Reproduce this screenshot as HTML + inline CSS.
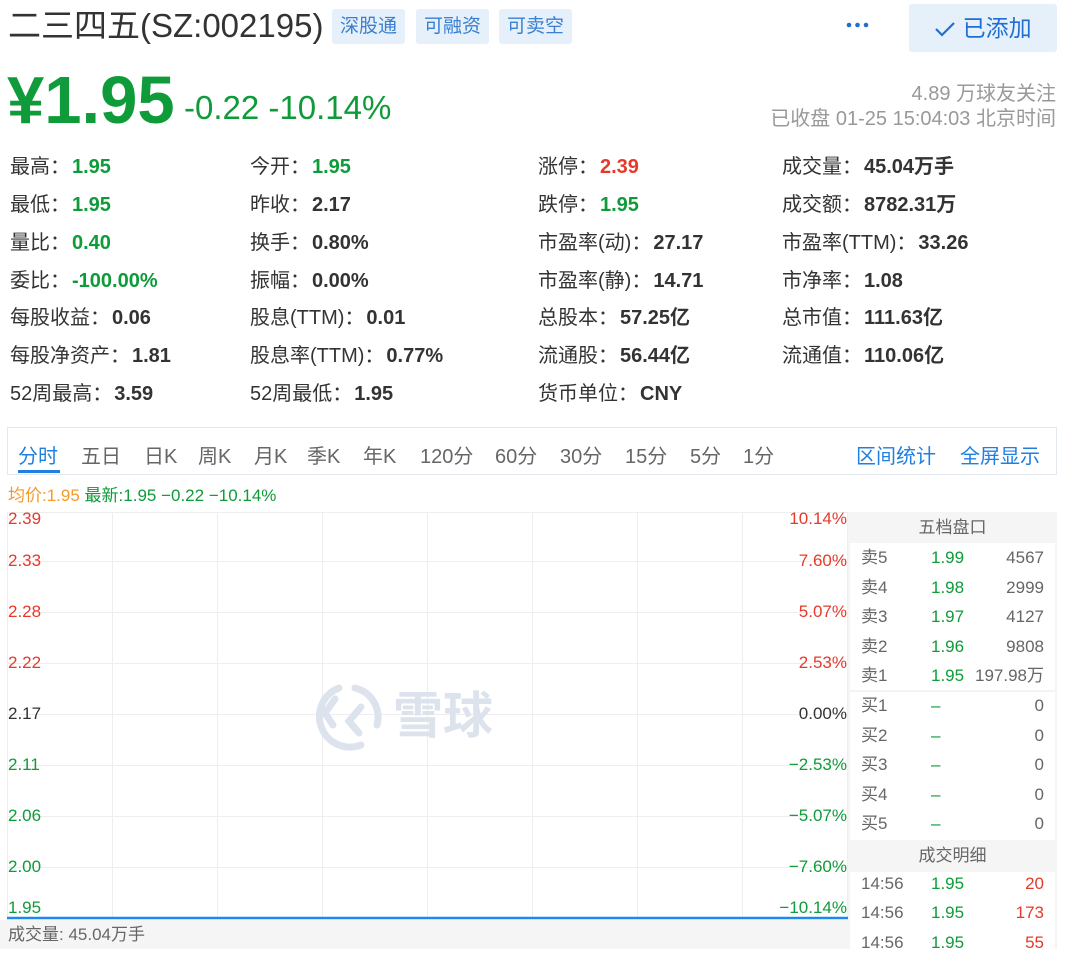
<!DOCTYPE html>
<html><head><meta charset="utf-8"><style>
*{margin:0;padding:0;box-sizing:border-box}
body{width:1080px;height:949px;background:#fff;font-family:"Liberation Sans","Noto Sans CJK SC",sans-serif;position:relative;overflow:hidden;color:#333}
.a{position:absolute;white-space:nowrap}
.tag{position:absolute;top:9px;height:35px;background:#e6f0fb;color:#3a7fd0;font-size:19px;line-height:35px;padding:0 8px;border-radius:3px}
.g{color:#0f9b3a}.r{color:#e53a2a}
.st{position:absolute;font-size:20px;line-height:24px;color:#333;margin-top:2px}
.st b{font-weight:bold;margin-left:2px}
.tab{position:absolute;top:440px;font-size:20px;color:#666}
.pl{position:absolute;left:8px;font-size:17px}
.pr{position:absolute;right:233px;font-size:17px}
.ob{position:absolute;font-size:17px;line-height:20px}
</style></head><body>
<div class="a" style="left:8px;top:5px;font-size:33px;color:#333;line-height:42px">二三四五(SZ:002195)</div>
<div class="tag" style="left:332px">深股通</div>
<div class="tag" style="left:416px">可融资</div>
<div class="tag" style="left:499px">可卖空</div>
<svg class="a" style="left:845px;top:20px" width="26" height="10"><circle cx="4" cy="5" r="2.3" fill="#1f6fd0"/><circle cx="12.5" cy="5" r="2.3" fill="#1f6fd0"/><circle cx="21" cy="5" r="2.3" fill="#1f6fd0"/></svg>
<div class="a" style="left:909px;top:4px;width:148px;height:48px;background:#e6f0fb;border-radius:3px;color:#1f6fd0;font-size:23px;line-height:48px;text-align:center">
<svg width="22" height="16" viewBox="0 0 22 16" style="vertical-align:-1px"><path d="M2 8 L8 14 L20 2" stroke="#1f6fd0" stroke-width="2.2" fill="none"/></svg> 已添加</div>
<div class="a g" style="left:7px;top:63px;font-size:67px;font-weight:bold;line-height:76px">¥1.95</div>
<div class="a g" style="left:184px;top:89px;font-size:33px;line-height:38px">-0.22 -10.14%</div>
<div class="a" style="right:24px;top:82px;font-size:20px;color:#999;text-align:right;line-height:25px">4.89 万球友关注<br>已收盘 01-25 15:04:03 北京时间</div>

<div class="st" style="left:10px;top:153px">最高：<b class="g">1.95</b></div>
<div class="st" style="left:10px;top:191px">最低：<b class="g">1.95</b></div>
<div class="st" style="left:10px;top:229px">量比：<b class="g">0.40</b></div>
<div class="st" style="left:10px;top:267px">委比：<b class="g">-100.00%</b></div>
<div class="st" style="left:10px;top:304px">每股收益：<b>0.06</b></div>
<div class="st" style="left:10px;top:342px">每股净资产：<b>1.81</b></div>
<div class="st" style="left:10px;top:380px">52周最高：<b>3.59</b></div>

<div class="st" style="left:250px;top:153px">今开：<b class="g">1.95</b></div>
<div class="st" style="left:250px;top:191px">昨收：<b>2.17</b></div>
<div class="st" style="left:250px;top:229px">换手：<b>0.80%</b></div>
<div class="st" style="left:250px;top:267px">振幅：<b>0.00%</b></div>
<div class="st" style="left:250px;top:304px">股息(TTM)：<b>0.01</b></div>
<div class="st" style="left:250px;top:342px">股息率(TTM)：<b>0.77%</b></div>
<div class="st" style="left:250px;top:380px">52周最低：<b>1.95</b></div>

<div class="st" style="left:538px;top:153px">涨停：<b class="r">2.39</b></div>
<div class="st" style="left:538px;top:191px">跌停：<b class="g">1.95</b></div>
<div class="st" style="left:538px;top:229px">市盈率(动)：<b>27.17</b></div>
<div class="st" style="left:538px;top:267px">市盈率(静)：<b>14.71</b></div>
<div class="st" style="left:538px;top:304px">总股本：<b>57.25亿</b></div>
<div class="st" style="left:538px;top:342px">流通股：<b>56.44亿</b></div>
<div class="st" style="left:538px;top:380px">货币单位：<b>CNY</b></div>

<div class="st" style="left:782px;top:153px">成交量：<b>45.04万手</b></div>
<div class="st" style="left:782px;top:191px">成交额：<b>8782.31万</b></div>
<div class="st" style="left:782px;top:229px">市盈率(TTM)：<b>33.26</b></div>
<div class="st" style="left:782px;top:267px">市净率：<b>1.08</b></div>
<div class="st" style="left:782px;top:304px">总市值：<b>111.63亿</b></div>
<div class="st" style="left:782px;top:342px">流通值：<b>110.06亿</b></div>

<div class="a" style="left:7px;top:427px;width:1050px;height:48px;border:1px solid #e3e8ef"></div>
<div class="tab" style="left:18px;color:#1f80e0">分时</div>
<div class="a" style="left:18px;top:470px;width:42px;height:3px;background:#1f80e0"></div>
<div class="tab" style="left:81px">五日</div>
<div class="tab" style="left:144px">日K</div>
<div class="tab" style="left:198px">周K</div>
<div class="tab" style="left:254px">月K</div>
<div class="tab" style="left:307px">季K</div>
<div class="tab" style="left:363px">年K</div>
<div class="tab" style="left:420px">120分</div>
<div class="tab" style="left:495px">60分</div>
<div class="tab" style="left:560px">30分</div>
<div class="tab" style="left:625px">15分</div>
<div class="tab" style="left:690px">5分</div>
<div class="tab" style="left:743px">1分</div>
<div class="tab" style="left:856px;color:#1f80e0">区间统计</div>
<div class="tab" style="left:960px;color:#1f80e0">全屏显示</div>

<div class="a" style="left:8px;top:481px;font-size:17px"><span style="color:#f39a2b">均价:1.95</span> <span class="g">最新:1.95 −0.22 −10.14%</span></div>

<svg class="a" style="left:0;top:505px" width="850" height="420">
<g stroke="#eeeeee" stroke-width="1">
<line x1="7" y1="7.5" x2="848" y2="7.5"/>
<line x1="7" y1="56.5" x2="848" y2="56.5"/><line x1="7" y1="107.5" x2="848" y2="107.5"/><line x1="7" y1="158.5" x2="848" y2="158.5"/><line x1="7" y1="209.5" x2="848" y2="209.5"/><line x1="7" y1="260.5" x2="848" y2="260.5"/><line x1="7" y1="311.5" x2="848" y2="311.5"/><line x1="7" y1="362.5" x2="848" y2="362.5"/>
<line x1="7.5" y1="7" x2="7.5" y2="413"/><line x1="112.5" y1="7" x2="112.5" y2="413"/><line x1="217.5" y1="7" x2="217.5" y2="413"/><line x1="322.5" y1="7" x2="322.5" y2="413"/><line x1="427.5" y1="7" x2="427.5" y2="413"/><line x1="532.5" y1="7" x2="532.5" y2="413"/><line x1="637.5" y1="7" x2="637.5" y2="413"/><line x1="742.5" y1="7" x2="742.5" y2="413"/><line x1="847.5" y1="7" x2="847.5" y2="413"/>
</g>
<line x1="7" y1="413" x2="848" y2="413" stroke="#1f88ee" stroke-width="2.5"/>
<g transform="translate(315,178)" fill="none" stroke="#dde3ec" stroke-width="7" stroke-linecap="round">
<path d="M24 5 A30 30 0 1 0 46 62"/><path d="M40 5 A30 30 0 0 1 62 42"/>
<path d="M20 16 L10 30 L18 42"/><path d="M46 24 L34 38 L44 50"/>
</g>
<text x="393" y="228" font-size="50" fill="#dde3ec" font-family="Noto Sans CJK SC,sans-serif" font-weight="bold">雪球</text>
</svg>

<div class="pl r" style="top:509px">2.39</div>
<div class="pl r" style="top:551px">2.33</div>
<div class="pl r" style="top:602px">2.28</div>
<div class="pl r" style="top:653px">2.22</div>
<div class="pl" style="top:704px;color:#333">2.17</div>
<div class="pl g" style="top:755px">2.11</div>
<div class="pl g" style="top:806px">2.06</div>
<div class="pl g" style="top:857px">2.00</div>
<div class="pl g" style="top:898px">1.95</div>
<div class="pr r" style="top:509px">10.14%</div>
<div class="pr r" style="top:551px">7.60%</div>
<div class="pr r" style="top:602px">5.07%</div>
<div class="pr r" style="top:653px">2.53%</div>
<div class="pr" style="top:704px;color:#333">0.00%</div>
<div class="pr g" style="top:755px">−2.53%</div>
<div class="pr g" style="top:806px">−5.07%</div>
<div class="pr g" style="top:857px">−7.60%</div>
<div class="pr g" style="top:898px">−10.14%</div>

<div class="a" style="left:0;top:920px;width:848px;height:29px;background:#f5f5f5;font-size:17px;color:#666;line-height:29px;padding-left:8px">成交量: 45.04万手</div>

<div class="a" style="left:848px;top:512px;width:209px;height:31px;background:#f5f5f5;text-align:center;font-size:17px;line-height:31px;color:#666">五档盘口</div>
<div class="a" style="left:848px;top:690px;width:209px;height:2px;background:#f3f3f3"></div>
<div class="a" style="left:848px;top:840px;width:209px;height:32px;background:#f5f5f5;text-align:center;font-size:17px;line-height:32px;color:#666">成交明细</div>
<div class="a" style="left:848px;top:543px;width:2px;height:406px;background:#f5f5f5"></div>
<div class="a" style="left:1055px;top:512px;width:2px;height:437px;background:#f5f5f5"></div>

<div class="ob" style="left:861px;top:543px;color:#666;line-height:29.6px">卖5<br>卖4<br>卖3<br>卖2<br>卖1</div>
<div class="ob g" style="left:931px;top:543px;line-height:29.6px">1.99<br>1.98<br>1.97<br>1.96<br>1.95</div>
<div class="ob" style="right:36px;top:543px;color:#666;line-height:29.6px;text-align:right">4567<br>2999<br>4127<br>9808<br>197.98万</div>
<div class="ob" style="left:861px;top:691px;color:#666;line-height:29.6px">买1<br>买2<br>买3<br>买4<br>买5</div>
<div class="ob g" style="left:931px;top:691px;line-height:29.6px">–<br>–<br>–<br>–<br>–</div>
<div class="ob" style="right:36px;top:691px;color:#666;line-height:29.6px;text-align:right">0<br>0<br>0<br>0<br>0</div>
<div class="ob" style="left:861px;top:869px;color:#666;line-height:29.3px">14:56<br>14:56<br>14:56</div>
<div class="ob g" style="left:931px;top:869px;line-height:29.3px">1.95<br>1.95<br>1.95</div>
<div class="ob r" style="right:36px;top:869px;line-height:29.3px;text-align:right">20<br>173<br>55</div>
</body></html>
